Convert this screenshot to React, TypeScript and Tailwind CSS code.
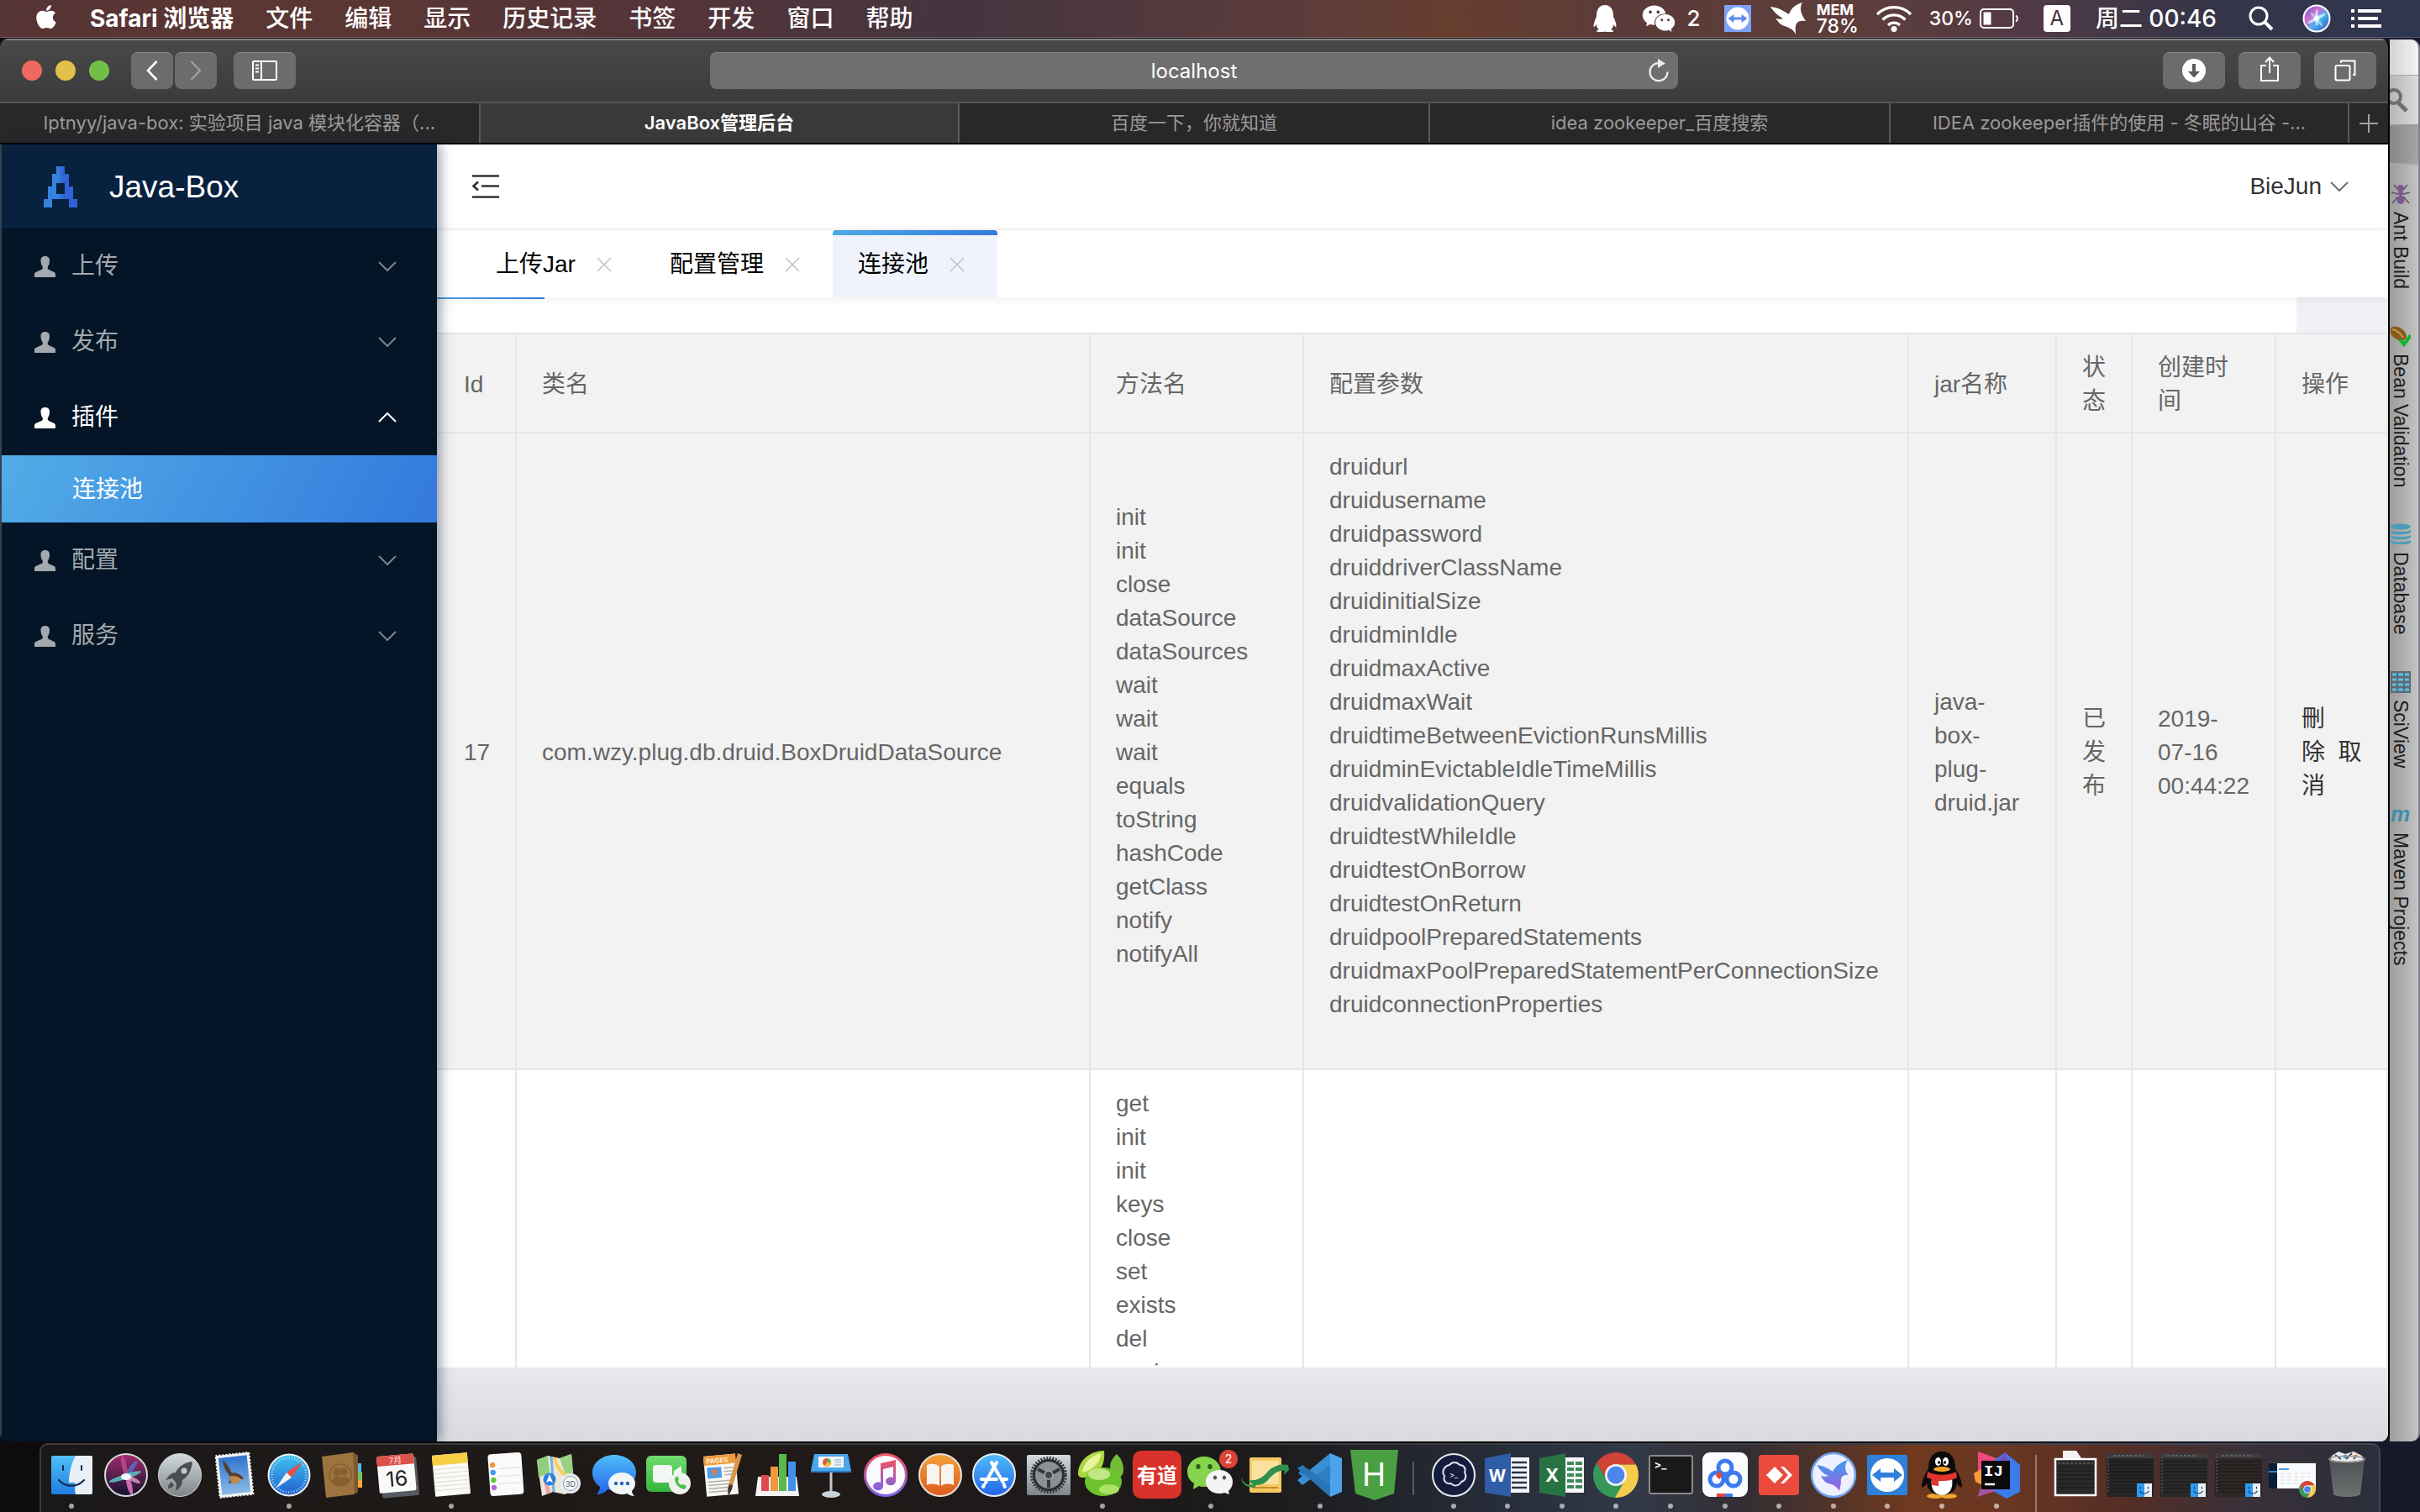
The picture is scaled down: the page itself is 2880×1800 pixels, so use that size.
import React from "react";
import { FaApple, FaQq } from "react-icons/fa";
import { AiFillWechat } from "react-icons/ai";

const SYS = "font-[Inter,'Noto_Sans_CJK_SC',sans-serif]";
const PAGE = "font-['Liberation_Sans','Noto_Sans_CJK_SC',sans-serif]";

/* ---------- small drawings ---------- */

function Chevron({ up, className }: { up?: boolean; className?: string }) {
  return (
    <svg viewBox="0 0 22 12" className={`h-3 w-[22px] ${className ?? ""}`} fill="none" stroke="currentColor" strokeWidth="2">
      <path d={up ? "M1 11 11 1l10 10" : "M1 1l10 10L21 1"} />
    </svg>
  );
}

function Cross() {
  return (
    <svg viewBox="0 0 18 18" className="size-[18px]" fill="none" stroke="#c3c3c3" strokeWidth="1.6">
      <path d="M1 1l16 16M17 1 1 17" />
    </svg>
  );
}

function Person() {
  return (
    <svg viewBox="0 0 25 25" className="size-[25px] shrink-0" fill="currentColor">
      <path d="M7.500 5C7.500 1.500 9.500 0 12.700 0S18 1.500 18 5c0 3-.7 5.500-2.200 7.500v2.300C17 16.500 20 17.300 23 18.800c1.500.8 2 1.500 2 3.200v3H0v-3c0-1.700.5-2.400 2-3.200 3-1.500 6.500-2.300 7.800-4v-2.300C8.200 10.500 7.500 8 7.500 5Z" />
    </svg>
  );
}

function TowerLogo() {
  return (
    <svg viewBox="0 0 40 49" className="h-[49px] w-10">
      <defs>
        <linearGradient id="tower" x1="0" x2="1">
          <stop offset="0.4" stopColor="#3583df" />
          <stop offset="0.6" stopColor="#2f62d6" />
        </linearGradient>
      </defs>
      <path
        fill="url(#tower)"
        fillRule="evenodd"
        d="M15 0h10v9h5v15h5v15h5v10H30V39H10v10H0V39h5V24h5V9h5ZM15 20v13h10V20Z"
      />
    </svg>
  );
}

/* ---------- menu bar ---------- */

const MENUS = ["文件", "编辑", "显示", "历史记录", "书签", "开发", "窗口", "帮助"];

function SiriOrb() {
  return (
    <svg viewBox="0 0 34 34" className="size-[34px]">
      <defs>
        <linearGradient id="orb" x1="0" y1="0" x2="1" y2="1">
          <stop offset="0" stopColor="#3a57c4" />
          <stop offset="0.35" stopColor="#d96bd0" />
          <stop offset="0.6" stopColor="#45b4ea" />
          <stop offset="1" stopColor="#3a3fb5" />
        </linearGradient>
      </defs>
      <circle cx="17" cy="17" r="15.500" fill="url(#orb)" stroke="#fff" strokeWidth="2" />
      <ellipse cx="17" cy="16" rx="1.800" ry="10" fill="#f3ecff" opacity="0.8" />
      <ellipse cx="17" cy="17" rx="12" ry="2" transform="rotate(-28 17 17)" fill="#cdf6ff" opacity="0.85" />
      <ellipse cx="17" cy="18" rx="11" ry="2" transform="rotate(50 17 18)" fill="#a8eaff" opacity="0.7" />
      <circle cx="17" cy="17" r="3" fill="#fff" />
    </svg>
  );
}

function MenuBar() {
  return (
    <header
      className={`${SYS} flex h-[45px] shrink-0 items-center justify-between border-b border-white/20 bg-[linear-gradient(90deg,#573435_0%,#5b3733_14%,#54343a_28%,#44353f_40%,#5b3b3c_53%,#673e2e_60%,#5b3b39_67%,#5e3e3a_76%,#533a44_83%,#363548_91%,#2e3650_100%)] pr-[46px] pl-[41px] text-[28px] leading-[40px] whitespace-nowrap text-white`}
    >
      <nav className="flex items-center gap-[38px]">
        <button aria-label="Apple" className="-mt-1">
          <FaApple className="h-8 w-7" />
        </button>
        <button className="font-bold">Safari 浏览器</button>
        {MENUS.map((m) => (
          <button key={m} className="font-medium">
            {m}
          </button>
        ))}
      </nav>
      <div className="flex items-center">
        <FaQq className="mr-[28px] h-8 w-[28px]" />
        <AiFillWechat className="mr-3 size-[44px]" />
        <span className="mr-[28px] text-[26px] font-medium">2</span>
        <svg viewBox="0 0 32 32" className="mr-[22px] size-8">
          <rect width="32" height="32" fill="#7ea2f8" />
          <circle cx="16" cy="16" r="13.500" fill="#fff" />
          <path d="M4.500 16l7-5v3.500h9V11l7 5-7 5v-3.500h-9V21Z" fill="#5d8af2" />
        </svg>
        <svg viewBox="0 0 44 38" className="mr-3 h-[38px] w-11" fill="#fff">
          <path d="M1 5c8 1 12 3 17 6 2 1 3 2 5 3C25 9 28 3 39 0c-3 5-2 9-1 13 1 3 3 6 5 9-6-1-9 0-11 3-2 4-1 8-1 13C27 30 22 30 15 27 13 26 10 23 7 19c4 1 7 1 9 0C9 15 5 11 1 5Z" />
        </svg>
        <span className="mr-[20px] flex flex-col pt-0.5">
          <span className="text-[18px] leading-[16px] font-bold">MEM</span>
          <span className="text-[23px] leading-[22px] font-medium">78%</span>
        </span>
        <svg viewBox="0 0 44 32" className="mr-[20px] h-8 w-11" fill="none" stroke="#fff" strokeWidth="3.400">
          <path d="M2 11a28 28 0 0 1 40 0M8.500 17.500a19 19 0 0 1 27 0M15 24a10 10 0 0 1 14 0" />
          <circle cx="22" cy="28.500" r="3.500" fill="#fff" stroke="none" />
        </svg>
        <span className="mr-2 text-[23px] font-medium">30%</span>
        <svg viewBox="0 0 46 24" className="mr-[30px] h-6 w-[46px]" fill="none" stroke="#fff" strokeWidth="2">
          <rect x="1" y="1" width="39" height="22" rx="4" />
          <rect x="4.500" y="4.500" width="9" height="15" fill="#fff" stroke="none" />
          <path d="M43 8.500c2.500 1.500 2.500 5.500 0 7" />
        </svg>
        <span className="mr-[30px] flex size-8 items-center justify-center rounded bg-white text-[24px] leading-8 text-[#45313a]">A</span>
        <time className="mr-[38px] font-medium">周二 00:46</time>
        <svg viewBox="0 0 30 30" className="mr-[34px] size-[30px]" fill="none" stroke="#fff" strokeWidth="3">
          <circle cx="12" cy="12" r="10" />
          <path d="M19 19l9 9" strokeWidth="4" />
        </svg>
        <span className="mr-[24px]">
          <SiriOrb />
        </span>
        <svg viewBox="0 0 36 22" className="h-[22px] w-9" fill="#fff">
          <path d="M0 0h4v4H0zM8 0h28v4H8zM0 9h4v4H0zM8 9h24v4H8zM0 18h4v4H0zM8 18h28v4H8z" />
        </svg>
      </div>
    </header>
  );
}

/* ---------- browser chrome ---------- */

const toolBtn =
  "flex h-11 items-center justify-center rounded-[8px] border-t border-[#8a898a] bg-[#6d6c6d] text-white";

function Toolbar() {
  return (
    <div className="grid h-[75px] shrink-0 grid-cols-[1fr_1152px_1fr] items-center border-t-2 border-[#858585] bg-linear-to-b from-[#4a4949] to-[#3c3b3b] px-[14px] pb-0.5">
      <div className="flex items-center pl-3">
        <div className="mr-[26px] flex gap-4">
          <button aria-label="Close" className="size-6 rounded-full bg-[#ee6a5f]" />
          <button aria-label="Minimize" className="size-6 rounded-full bg-[#e2c04c]" />
          <button aria-label="Zoom" className="size-6 rounded-full bg-[#72bf47]" />
        </div>
        <button aria-label="Back" className={`${toolBtn} mr-0.5 w-[50px]`}>
          <svg viewBox="0 0 14 24" className="h-6 w-[14px]" fill="none" stroke="#fff" strokeWidth="2.600">
            <path d="M12.500 1 2 12l10.500 11" />
          </svg>
        </button>
        <button aria-label="Forward" className={`${toolBtn} mr-5 w-[50px]`}>
          <svg viewBox="0 0 14 24" className="h-6 w-[14px]" fill="none" stroke="#a0a0a0" strokeWidth="2.200">
            <path d="M1.500 1 12 12 1.500 23" />
          </svg>
        </button>
        <button aria-label="Sidebar" className={`${toolBtn} w-[74px]`}>
          <svg viewBox="0 0 30 24" className="h-6 w-[30px]" fill="none" stroke="#fff" strokeWidth="2">
            <rect x="1" y="1" width="28" height="22" rx="1.500" />
            <path d="M11 1v22" />
            <path d="M4 5.500h4M4 9.500h4M4 13.500h4" />
          </svg>
        </button>
      </div>
      <div className="relative">
        <input
          readOnly
          aria-label="Address"
          value="localhost"
          className="h-11 w-full rounded-[8px] border-t border-[#8a898a] bg-[#6f6f6f] text-center text-[24px] text-white outline-none"
        />
        <button aria-label="Reload" className="absolute top-[8px] right-[10px]">
          <svg viewBox="0 0 26 28" className="h-7 w-[26px]" fill="none" stroke="#ececec" strokeWidth="2.200">
            <path d="M12.500 5.200A10.500 10.500 0 1 0 23.500 15.500" />
            <path d="M12 0l9 5.500-9 5.500Z" fill="#ececec" stroke="none" />
          </svg>
        </button>
      </div>
      <div className="flex justify-end gap-4">
        <button aria-label="Downloads" className={`${toolBtn} w-[74px]`}>
          <svg viewBox="0 0 28 28" className="size-7">
            <circle cx="14" cy="14" r="14" fill="#fff" />
            <path d="M12 6h4v9h5l-7 7.500L7 15h5Z" fill="#5c5b5c" />
          </svg>
        </button>
        <button aria-label="Share" className={`${toolBtn} w-[74px]`}>
          <svg viewBox="0 0 24 30" className="-mt-1 h-[30px] w-6" fill="none" stroke="#fff" strokeWidth="2">
            <path d="M8 11H2v18h20V11h-6M12 20V2M7 7l5-5.500L17 7" />
          </svg>
        </button>
        <button aria-label="Tabs" className={`${toolBtn} w-[74px]`}>
          <svg viewBox="0 0 26 26" className="size-[26px]" fill="none" stroke="#fff" strokeWidth="2">
            <rect x="1.500" y="7" width="17" height="17.500" rx="1.500" />
            <path d="M8 4V1.500h16.500V18H22" />
          </svg>
        </button>
      </div>
    </div>
  );
}

const TABS: { title: string; grow: string; active?: boolean }[] = [
  { title: "lptnyy/java-box: 实验项目 java 模块化容器（...", grow: "flex-[572]" },
  { title: "JavaBox管理后台", grow: "flex-[570]", active: true },
  { title: "百度一下，你就知道", grow: "flex-[560]" },
  { title: "idea zookeeper_百度搜索", grow: "flex-[548]" },
  { title: "IDEA zookeeper插件的使用 - 冬眠的山谷 -...", grow: "flex-[546]" },
];

function TabBar() {
  return (
    <div role="tablist" className="flex h-[51px] shrink-0 border-t-2 border-b-2 border-t-[#555455] border-b-black bg-[#292828] text-[22px] whitespace-nowrap">
      {TABS.map((t) => (
        <button
          key={t.title}
          role="tab"
          aria-selected={!!t.active}
          className={`${t.grow} min-w-0 border-r-2 border-[#5c5b5c] ${t.active ? "bg-[#3a3939] font-semibold text-white" : "text-[#9b9a9b]"}`}
        >
          {t.title}
        </button>
      ))}
      <button aria-label="New tab" className="flex w-[46px] items-center justify-center">
        <svg viewBox="0 0 22 22" className="size-[22px]" stroke="#a0a0a0" strokeWidth="2">
          <path d="M11 0v22M0 11h22" />
        </svg>
      </button>
    </div>
  );
}

/* ---------- admin page ---------- */

const NAV: { label: string; open?: boolean; children?: string[] }[] = [
  { label: "上传" },
  { label: "发布" },
  { label: "插件", open: true, children: ["连接池"] },
  { label: "配置" },
  { label: "服务" },
];

function Sidebar() {
  return (
    <aside className="relative z-20 w-[520px] shrink-0 border-l-2 border-white/20 bg-[#031526] shadow-[4px_0_14px_rgba(0,15,50,0.4)]">
      <div className="flex h-[100px] items-center gap-[38px] bg-[#08213e] pl-[50px]">
        <TowerLogo />
        <span className="pt-0.5 text-[37px] text-white">Java-Box</span>
      </div>
      <nav>
        {NAV.map((n) => (
          <React.Fragment key={n.label}>
            <button
              aria-expanded={!!n.open}
              className={`flex h-[90px] w-full items-center pr-[48px] pl-[39px] text-[28px] ${n.open ? "text-white" : "text-[#a3a9ae]"}`}
            >
              <Person />
              <span className="ml-[19px] flex-1 text-left">{n.label}</span>
              <Chevron up={n.open} className={n.open ? "" : "text-[#7d858d]"} />
            </button>
            {n.children?.map((c) => (
              <a key={c} href="#pool" className="flex h-20 items-center bg-[linear-gradient(118deg,#52ace6,#3379dd)] pt-0.5 pl-[84px] text-[28px] text-white">
                {c}
              </a>
            ))}
          </React.Fragment>
        ))}
      </nav>
    </aside>
  );
}

function PageTabs() {
  const tabs = ["上传Jar", "配置管理", "连接池"];
  return (
    <div role="tablist" className="relative z-10 flex h-20 shrink-0 bg-white pl-10 text-[28px] text-black shadow-[0_2px_12px_rgba(0,30,30,0.08)]">
      {tabs.map((t, i) => (
        <div key={t} className={`relative flex items-center pt-0.5 pr-[39px] pl-[30px] ${i === 2 ? "bg-[#f0f3fc]" : ""}`}>
          {i === 2 && <span className="absolute inset-x-0 top-0 h-1.5 rounded-t bg-linear-to-r from-[#50a8e6] to-[#337adc]" />}
          <button role="tab" aria-selected={i === 2}>
            {t}
          </button>
          <button aria-label={`关闭 ${t}`} className="ml-[25px]">
            <Cross />
          </button>
        </div>
      ))}
      <span className="absolute top-full left-0 h-0.5 w-32 bg-linear-to-r from-[#4a9fe0] to-[#337adc]" />
    </div>
  );
}

const METHODS = ["init", "init", "close", "dataSource", "dataSources", "wait", "wait", "wait", "equals", "toString", "hashCode", "getClass", "notify", "notifyAll"];
const PARAMS = [
  "druidurl", "druidusername", "druidpassword", "druiddriverClassName", "druidinitialSize", "druidminIdle",
  "druidmaxActive", "druidmaxWait", "druidtimeBetweenEvictionRunsMillis", "druidminEvictableIdleTimeMillis",
  "druidvalidationQuery", "druidtestWhileIdle", "druidtestOnBorrow", "druidtestOnReturn",
  "druidpoolPreparedStatements", "druidmaxPoolPreparedStatementPerConnectionSize", "druidconnectionProperties",
];
const MORE = ["get", "init", "init", "keys", "close", "set", "exists", "del", "expire"];

function Lines({ items, tail }: { items: string[]; tail?: boolean }) {
  return (
    <>
      {items.map((s, i) => (
        <div key={i}>{s}</div>
      ))}
      {tail && <div className="h-10" />}
    </>
  );
}

const cell = "border-r-2 border-b-2 border-[#e6e6e6] pt-5 pb-4 pl-[30px] text-left font-normal";
const idCell = "border-r-2 border-b-2 border-[#e6e6e6] pt-5 pb-4 pl-8 text-left font-normal";

function PoolTable() {
  return (
    <table className="w-full table-fixed border-separate border-spacing-0 border-t-2 border-[#e6e6e6] text-[28px] leading-10 text-[#666]">
      <colgroup>
        <col className="w-[95px]" />
        <col />
        <col className="w-[254px]" />
        <col className="w-[720px]" />
        <col className="w-[176px]" />
        <col className="w-[90px]" />
        <col className="w-[171px]" />
        <col className="w-[133px]" />
      </colgroup>
      <thead className="bg-[#f2f2f2]">
        <tr>
          <th className={idCell}>Id</th>
          <th className={cell}>类名</th>
          <th className={cell}>方法名</th>
          <th className={cell}>配置参数</th>
          <th className={cell}>jar名称</th>
          <th className={cell}>
            状<br />态
          </th>
          <th className={cell}>
            创建时
            <br />间
          </th>
          <th className={cell}>操作</th>
        </tr>
      </thead>
      <tbody>
        <tr className="bg-[#f2f2f2]">
          <td className={idCell}>17</td>
          <td className={cell}>com.wzy.plug.db.druid.BoxDruidDataSource</td>
          <td className={cell}>
            <Lines items={METHODS} tail />
          </td>
          <td className={cell}>
            <Lines items={PARAMS} tail />
          </td>
          <td className={cell}>
            <Lines items={["java-", "box-", "plug-", "druid.jar"]} />
          </td>
          <td className={cell}>
            <Lines items={["已", "发", "布"]} />
          </td>
          <td className={cell}>
            <Lines items={["2019-", "07-16", "00:44:22"]} />
          </td>
          <td className={`${cell} whitespace-nowrap text-[#333]`}>
            <a href="#delete">
              刪<br />除
            </a>
            &nbsp;&nbsp;
            <a href="#cancel">
              取<br />消
            </a>
          </td>
        </tr>
        <tr className="bg-white">
          <td className={cell} />
          <td className={cell} />
          <td className={cell}>
            <Lines items={MORE} />
          </td>
          <td className={cell} />
          <td className={cell} />
          <td className={cell} />
          <td className={cell} />
          <td className={cell} />
        </tr>
      </tbody>
    </table>
  );
}

function AdminPage() {
  return (
    <div className={`${PAGE} flex min-h-0 flex-1`}>
      <Sidebar />
      <main className="flex min-w-0 flex-1 flex-col bg-white">
        <div className="flex h-[102px] shrink-0 items-center justify-between border-b-2 border-[#f5f5f5] pr-[47px] pl-[42px]">
          <button aria-label="收起菜单">
            <svg viewBox="0 0 32 28" className="h-7 w-8" fill="none" stroke="#333" strokeWidth="2.600">
              <path d="M0 1.500h32M11 13.500h21M0 26.500h32M7 8.500 1.500 13.500 7 18.500" />
            </svg>
          </button>
          <button className="flex items-center gap-2.5 text-[28px] text-[#333]">
            BieJun
            <Chevron className="text-[#6b7078]" />
          </button>
        </div>
        <PageTabs />
        <div className="flex h-[42px] shrink-0 justify-end">
          <div className="w-[109px] bg-[#eff1f6]" />
        </div>
        <div className="min-h-0 flex-1 overflow-hidden">
          <PoolTable />
        </div>
        <div className="h-[88px] shrink-0 bg-linear-to-b from-[#e8e9ee] to-[#d9dadd]" />
      </main>
    </div>
  );
}

/* ---------- IDE window peeking out on the right ---------- */

function ToolStrip() {
  const items: { name: string; icon: React.ReactNode }[] = [
    {
      name: "Ant Build",
      icon: (
        <g fill="#7b5595" stroke="#5c5560" strokeWidth="1.500">
          <path d="M4 2l5 6M20 2l-5 6M1 11l8 2M23 11l-8 2M2 24l7-8M22 24l-7-8" fill="none" />
          <circle cx="12" cy="6" r="4" stroke="none" />
          <circle cx="12" cy="12" r="3" stroke="none" />
          <ellipse cx="12" cy="20" rx="4.500" ry="5" stroke="none" />
        </g>
      ),
    },
    {
      name: "Bean Validation",
      icon: (
        <g>
          <ellipse cx="9" cy="10" rx="11" ry="7" transform="rotate(35 9 10)" fill="#8a5a1c" />
          <path d="M2 5c6 1 10 5 13 10" stroke="#c99a4e" strokeWidth="2" fill="none" />
          <path d="M11 17l5 6 8-11" stroke="#12b52a" strokeWidth="4" fill="none" />
        </g>
      ),
    },
    {
      name: "Database",
      icon: (
        <g fill="#4a9cba">
          <ellipse cx="12" cy="4" rx="12" ry="3.500" />
          <path d="M0 8c5 3 19 3 24 0v3c-5 3-19 3-24 0ZM0 14c5 3 19 3 24 0v3c-5 3-19 3-24 0ZM0 20c5 3 19 3 24 0v3c-5 3-19 3-24 0Z" />
        </g>
      ),
    },
    {
      name: "SciView",
      icon: (
        <g>
          <rect width="24" height="26" fill="#5e6b76" />
          <path d="M2 4h5M9 4h6M17 4h5M2 10h5M9 10h6M17 10h5M2 16h5M9 16h6M17 16h5M2 22h5M9 22h6M17 22h5" stroke="#5cc0e2" strokeWidth="3" />
        </g>
      ),
    },
    {
      name: "Maven Projects",
      icon: (
        <text x="0" y="21" fontSize="26" fontWeight="700" fontStyle="italic" fill="#3d8ead" fontFamily="Liberation Sans, sans-serif">
          m
        </text>
      ),
    },
  ];
  return (
    <aside className="mt-0.5 flex w-9 shrink-0 flex-col rounded-r-[10px] border-r-2 border-[#82828c] bg-linear-to-r from-[#9c9c9c] to-[#c4c4c4]">
      <div className="h-[43px] rounded-tr-[10px] border-b border-[#a9a9a9] bg-linear-to-r from-[#d2d2d2] to-[#f4f4f4]" />
      <div className="flex h-[60px] items-center overflow-hidden border-b-2 border-[#999] bg-linear-to-r from-[#b5b5b5] to-[#dcdcdc]">
        <svg viewBox="0 0 26 30" className="-ml-1 h-[30px] w-[26px]" fill="none" stroke="#6e6e6e" strokeWidth="4">
          <circle cx="9" cy="11" r="8" />
          <path d="M14 18l10 10" strokeWidth="5" />
        </svg>
      </div>
      <div className="h-[46px] border-b-2 border-[#a5a5a5] bg-linear-to-r from-[#868686] to-[#a6a6a6]" />
      <div className="flex flex-col gap-[43px] pt-[22px]">
        {items.map((it) => (
          <button key={it.name} className="flex w-[26px] flex-col items-center gap-2">
            <svg viewBox="0 0 24 26" className="h-[26px] w-6 shrink-0">
              {it.icon}
            </svg>
            <span className={`${PAGE} text-[23px] leading-6 whitespace-nowrap text-[#1c1c1c] [writing-mode:vertical-rl]`}>{it.name}</span>
          </button>
        ))}
      </div>
    </aside>
  );
}

/* ---------- dock ---------- */

const T = ({ x, y, s, c, b, r, children }: { x: number; y: number; s: number; c: string; b?: boolean; r?: string; children: string }) => (
  <text x={x} y={y} fontSize={s} fill={c} fontWeight={b ? 700 : 400} textAnchor="middle" transform={r} fontFamily="Inter, 'Noto Sans CJK SC', sans-serif">
    {children}
  </text>
);

const MiniFinder = () => (
  <g>
    <rect x="40" y="42" width="9" height="16" fill="#2e9bf0" />
    <rect x="49" y="42" width="9" height="16" fill="#e8eef5" />
    <path d="M43.500 51c3 4 8 4 11 0" stroke="#1c3a63" strokeWidth="1.200" fill="none" />
    <path d="M44.500 46v2.500M53.500 46v2.500" stroke="#1c3a63" strokeWidth="1.200" />
  </g>
);

const DarkWindow = ({ tint }: { tint: string }) => (
  <g>
    <rect x="4" y="6" width="56" height="52" fill={tint} />
    <rect x="4" y="6" width="56" height="6" fill="#3d3b3b" />
    <path d="M4 16h56M4 20h56M4 24h56M4 28h56M4 32h56M4 36h56M4 40h56M4 44h56M4 48h56M4 52h56" stroke="#181717" strokeWidth="1" />
    <path d="M6 10v44" stroke="#4c4a4a" strokeWidth="2" strokeDasharray="2 2" />
    <path d="M12 9h36" stroke="#8a8888" strokeWidth="1" strokeDasharray="3 2" />
    <MiniFinder />
  </g>
);

const ChromeBall = ({ cx, cy, r }: { cx: number; cy: number; r: number }) => (
  <g transform={`translate(${cx} ${cy}) scale(${r / 26})`}>
    <path d="M0-12H23A26 26 0 0 0-21.900-14L-10.400 6Z" fill="#cf4437" />
    <path d="M-10.400 6-21.900-14A26 26 0 0 0-1.100 26L10.400 6Z" fill="#36995a" />
    <path d="M10.400 6-1.100 26A26 26 0 0 0 23-12H0Z" fill="#f5cd4c" />
    <circle r="12.500" fill="#f4f4f4" />
    <circle r="10" fill="#4a86ec" />
  </g>
);

type DockItem = { id: string; dot?: boolean; art: React.ReactNode };

const APPS: DockItem[] = [
  {
    id: "Finder",
    dot: true,
    art: (
      <g>
        <rect x="8" y="9" width="49" height="46" rx="2" fill="url(#gFinder)" />
        <path d="M37 9h18a2 2 0 0 1 2 2v42a2 2 0 0 1-2 2H37c-1-5-1-9-1-14h-7c0-12 3-23 8-32Z" fill="#e9eff6" />
        <path d="M17 38c8 9 22 9 30 0M22 21v5M44 21v5" stroke="#16284a" strokeWidth="2" fill="none" strokeLinecap="round" />
      </g>
    ),
  },
  {
    id: "Siri",
    art: (
      <g>
        <circle cx="32" cy="32" r="25" fill="url(#gSiri)" stroke="#d8d8dd" strokeWidth="2" />
        <ellipse cx="30" cy="22" rx="3" ry="13" transform="rotate(-12 30 22)" fill="#d8579f" opacity="0.6" />
        <ellipse cx="38" cy="25" rx="3" ry="12" transform="rotate(35 38 25)" fill="#5d76d8" opacity="0.7" />
        <ellipse cx="31" cy="34" rx="20" ry="3" transform="rotate(-18 31 34)" fill="#5fdcd8" opacity="0.75" />
        <ellipse cx="36" cy="44" rx="3" ry="12" transform="rotate(-14 36 44)" fill="#e77cc6" opacity="0.85" />
        <ellipse cx="40" cy="37" rx="10" ry="2.500" transform="rotate(26 40 37)" fill="#f3b6d8" opacity="0.7" />
        <ellipse cx="32" cy="34" rx="6" ry="4" fill="#fff" opacity="0.9" />
      </g>
    ),
  },
  {
    id: "Launchpad",
    art: (
      <g>
        <circle cx="32" cy="32" r="25.500" fill="url(#gSilver)" stroke="#d0d5d8" strokeWidth="1" />
        <path d="M47 16c-9 1-16 5-20 13-4 0-8 3-12 9l8-2 5 6-1 9c6-4 8-8 8-13 7-4 11-12 12-22Z" fill="#494e54" />
        <circle cx="37" cy="27" r="3.500" fill="#c3cacd" />
        <path d="M22 40c-3 2-4 5-4 8 3 0 6-2 7-4Z" fill="#494e54" />
      </g>
    ),
  },
  {
    id: "Mail",
    art: (
      <g transform="rotate(-6 32 32)">
        <rect x="12" y="7" width="40" height="50" fill="#f0f1f2" stroke="#fff" strokeWidth="2" strokeDasharray="2 2" />
        <rect x="15" y="10" width="34" height="44" fill="url(#gSky)" />
        <path d="M20 13c4 4 7 9 9 16 6 0 11 3 14 9-4-1-6 0-8 4-2-2-6-3-11 0 2-4 3-7 1-12-4-5-5-11-5-17Z" fill="#54412f" />
        <path d="M26 33c5-1 10 1 14 5l-8 5c-4 0-6-4-6-10Z" fill="#c08a4c" />
      </g>
    ),
  },
  {
    id: "Safari",
    dot: true,
    art: (
      <g>
        <circle cx="32" cy="32" r="25.500" fill="#eef2f5" />
        <circle cx="32" cy="32" r="23.500" fill="url(#gSafari)" />
        <circle cx="32" cy="32" r="20.500" fill="none" stroke="#bfe3fb" strokeWidth="3" strokeDasharray="0.8 2.400" />
        <path d="M48 16 35 35l-6-6Z" fill="#ee4b40" />
        <path d="M16 48 29 29l6 6Z" fill="#f1f2f3" />
      </g>
    ),
  },
  {
    id: "Contacts",
    art: (
      <g>
        <path d="M44 18h10v10H44z" fill="#57b7e8" />
        <path d="M44 28h11v10H44z" fill="#79c257" />
        <path d="M44 38h11v9H44z" fill="#f2a63a" />
        <path d="M7 10 44 5l6 4v43l-5 3-33 4Z" fill="#9d7440" />
        <path d="M44 5l6 4v43l-4 2Z" fill="#7c5a2f" />
        <circle cx="29" cy="32" r="13" fill="none" stroke="#84602f" strokeWidth="1.500" />
        <circle cx="25" cy="28" r="4.500" fill="#84602f" />
        <circle cx="33" cy="28" r="4.500" fill="#84602f" />
        <path d="M19 41c1-6 4-8 7-8s4 1 5 2c2-2 8-1 9 5-5 6-15 7-21 1Z" fill="#84602f" />
      </g>
    ),
  },
  {
    id: "Calendar",
    art: (
      <g transform="rotate(-5 32 32)">
        <rect x="12" y="12" width="44" height="46" rx="2" fill="#555b60" />
        <rect x="9" y="8" width="44" height="44" rx="2" fill="#fafafa" />
        <path d="M9 10a2 2 0 0 1 2-2h40a2 2 0 0 1 2 2v10H9Z" fill="#dc5148" />
        <T x={31} y={18} s={10} c="#fbe5e3">7月</T>
        <T x={31} y={45} s={25} c="#222">16</T>
      </g>
    ),
  },
  {
    id: "Notes",
    dot: true,
    art: (
      <g transform="rotate(-5 32 32)">
        <rect x="11" y="7" width="42" height="49" rx="1" fill="#fbfaf6" />
        <rect x="11" y="7" width="42" height="12" fill="#f6cf45" />
        <path d="M11 24h42M11 29h42M11 34h42M11 39h42M11 44h42M11 49h42" stroke="#dcdad4" strokeWidth="1" />
      </g>
    ),
  },
  {
    id: "Reminders",
    art: (
      <g transform="rotate(-4 32 32)">
        <rect x="12" y="6" width="40" height="50" rx="4" fill="#fafafa" />
        <path d="M23 24h27M23 33h27M23 42h27" stroke="#ddd" strokeWidth="1" />
        <circle cx="17" cy="19" r="3.200" fill="#f39438" />
        <circle cx="17" cy="28" r="3.200" fill="#3f9ef2" />
        <circle cx="17" cy="37" r="3.200" fill="#5fc43f" />
        <circle cx="17" cy="46" r="3.200" fill="#b46bd6" />
      </g>
    ),
  },
  {
    id: "Maps",
    art: (
      <g>
        <path d="M5 14 18 9l14 3 14-5 4 43-12 5-14-3-13 5Z" fill="#ece7d8" />
        <path d="M5 14 18 9l2 20-13 6Z" fill="#8fce7c" />
        <path d="M32 12 46 7l2 26-10-4Z" fill="#98d384" />
        <path d="M26 11c2 12 8 20 22 26" stroke="#f8d054" strokeWidth="4" fill="none" />
        <path d="M15 38l4 16" stroke="#f0a3ab" strokeWidth="5" />
        <path d="M22 10l3 42" stroke="#6cb5ea" strokeWidth="3" />
        <circle cx="20" cy="37" r="7.500" fill="#2f7fe3" />
        <path d="M20 31l4 10-4-2-4 2Z" fill="#fff" />
        <circle cx="45" cy="42" r="12" fill="#e9ebed" />
        <circle cx="45" cy="42" r="8.500" fill="#f8f8f8" stroke="#8aa0b2" strokeWidth="1" />
        <T x={45} y={46} s={9} c="#4c5a66">3D</T>
      </g>
    ),
  },
  {
    id: "Messages",
    art: (
      <g>
        <path d="M32 8c14 0 26 9 26 21S46 50 32 50c-3 0-5 0-8-1-3 4-8 6-13 6 3-3 4-6 4-9C9 42 6 36 6 29 6 17 18 8 32 8Z" fill="url(#gMsg)" />
        <path d="M41 29c9 0 16 6 16 13 0 4-2 7-4 9 0 2 1 4 3 6-4 0-7-2-9-3-2 1-4 1-6 1-9 0-16-6-16-13s7-13 16-13Z" fill="#f2f5f8" />
        <circle cx="34" cy="42" r="2.200" fill="#2a62b5" />
        <circle cx="41" cy="42" r="2.200" fill="#2a62b5" />
        <circle cx="48" cy="42" r="2.200" fill="#2a62b5" />
      </g>
    ),
  },
  {
    id: "FaceTime",
    art: (
      <g>
        <rect x="5" y="9" width="48" height="43" rx="6" fill="url(#gGreen)" />
        <rect x="13" y="20" width="23" height="21" rx="4" fill="#f3f7f3" />
        <path d="M38 27l9-6v19l-9-6Z" fill="#f3f7f3" />
        <circle cx="45" cy="42" r="13" fill="#eef1ee" />
        <path d="M39 36c0 8 6 12 12 13l2-4-4-2-2 1c-2-1-4-3-4-5l1-2-2-4Z" fill="#4cc24c" />
      </g>
    ),
  },
  {
    id: "Pages",
    art: (
      <g>
        <g transform="rotate(-5 32 32)">
          <rect x="11" y="8" width="38" height="48" fill="#f8f7f4" />
          <rect x="11" y="8" width="38" height="11" fill="#f09a3c" />
          <T x={27} y={17} s={8} c="#fff1de" b>PAGES</T>
          <rect x="14" y="22" width="17" height="13" fill="#4f9ee6" />
          <path d="M19 25h8l-4 8Z" fill="#f07838" />
          <path d="M34 24h12M34 28h12M34 32h12M14 39h28M14 43h28M14 47h26M14 51h24" stroke="#b0aeaa" strokeWidth="1.500" />
        </g>
        <path d="M50 6l5 2-12 40-4 8-1-9Z" fill="#d99548" />
        <path d="M40 43l4 1-1 5-4 8-1-8Z" fill="#3a3a3a" />
      </g>
    ),
  },
  {
    id: "Numbers",
    art: (
      <g>
        <path d="M9 34h46l3 23H6Z" fill="#f2f3f4" />
        <rect x="13" y="32" width="9" height="19" fill="#e0484e" />
        <rect x="24" y="22" width="9" height="29" fill="#f0983e" />
        <rect x="34" y="7" width="9" height="44" fill="#57ba4c" />
        <rect x="45" y="16" width="9" height="35" fill="#4490e8" />
      </g>
    ),
  },
  {
    id: "Keynote",
    art: (
      <g>
        <path d="M12 7h40l4 20H8Z" fill="#4ba6ea" />
        <path d="M8 27h48v2H8Z" fill="#2c7bc0" />
        <rect x="17" y="10" width="30" height="13" fill="#f4f5f6" />
        <circle cx="27" cy="17" r="5" fill="#e8554c" />
        <path d="M27 17v-5a5 5 0 0 1 5 5Z" fill="#57ba4c" />
        <path d="M27 17h5a5 5 0 0 1-8 4Z" fill="#f3b93e" />
        <path d="M36 14h8M36 17h8M36 20h8" stroke="#9cc4e4" strokeWidth="1.500" />
        <path d="M30.500 29h3v24h-3z" fill="#c3c8cc" />
        <ellipse cx="32" cy="55" rx="11" ry="4" fill="#c9d2d9" />
      </g>
    ),
  },
  {
    id: "iTunes",
    art: (
      <g>
        <circle cx="32" cy="32" r="24.500" fill="#fbfbfd" stroke="url(#gTunes)" strokeWidth="3" />
        <path d="M26 18 44 14v25a6 5 0 1 1-3-4V22l-12 3v20a6 5 0 1 1-3-4Z" fill="url(#gTunes)" />
      </g>
    ),
  },
  {
    id: "Books",
    art: (
      <g>
        <circle cx="32" cy="32" r="25" fill="url(#gBooks)" stroke="#e9e2d8" strokeWidth="2" />
        <path d="M31 22c-4-4-10-4-15-2v24c5-2 11-2 15 1Zm2 0c4-4 10-4 15-2v24c-5-2-11-2-15 1Z" fill="#f8f5f0" />
      </g>
    ),
  },
  {
    id: "App Store",
    art: (
      <g>
        <circle cx="32" cy="32" r="25" fill="url(#gMsg)" stroke="#e8edf3" strokeWidth="2" />
        <path d="M35 17 22 41M29 17l14 24M17 37h18M41 37h6M20 44l-1 2M44 44l1 2" stroke="#fff" strokeWidth="4" strokeLinecap="round" />
      </g>
    ),
  },
  {
    id: "Settings",
    art: (
      <g>
        <rect x="6" y="8" width="52" height="48" rx="2" fill="url(#gSilver)" />
        <circle cx="32" cy="32" r="20" fill="none" stroke="#37393b" strokeWidth="4" strokeDasharray="2 1.500" />
        <circle cx="32" cy="32" r="17.500" fill="#8c9093" stroke="#2c2e30" strokeWidth="3" />
        <path d="M32 32 19 25M32 32l13-7M32 32v15" stroke="#35373a" strokeWidth="4" />
        <circle cx="32" cy="32" r="5" fill="#44474a" stroke="#a9adb0" strokeWidth="1.500" />
      </g>
    ),
  },
  {
    id: "Leaf",
    dot: true,
    art: (
      <g>
        <path d="M34 3C18 3 3 14 3 31c0 2 2 4 5 4 17 1 28-12 26-32Z" fill="#a9d93f" />
        <path d="M31 6C20 8 9 17 8 29c12-3 20-10 23-23Z" fill="#e9f39c" />
        <path d="M49 7C38 17 40 28 46 34c6 3 11-1 11-8 0-8-3-14-8-19Z" fill="#6fbe34" />
        <ellipse cx="33" cy="40" rx="22" ry="17" fill="#6cc32c" />
        <ellipse cx="28" cy="31" rx="13" ry="7" fill="#d4f09a" opacity="0.8" />
        <ellipse cx="40" cy="49" rx="12" ry="6" fill="#c9f084" opacity="0.7" />
      </g>
    ),
  },
  {
    id: "Youdao",
    art: (
      <g>
        <rect x="3" y="3" width="58" height="57" rx="10" fill="#d8322a" />
        <T x={32} y={41} s={24} c="#fff" b>有道</T>
      </g>
    ),
  },
  {
    id: "WeChat",
    dot: true,
    art: (
      <g>
        <path d="M24 10c11 0 20 8 20 18s-9 18-20 18c-2 0-4 0-6-1l-7 4 1-7C7 39 4 34 4 28c0-10 9-18 20-18Z" fill="#85d44c" />
        <ellipse cx="17" cy="22" rx="2.700" ry="3" fill="#2d5a1c" />
        <ellipse cx="31" cy="22" rx="2.700" ry="3" fill="#2d5a1c" />
        <path d="M42 26c9 0 16 6 16 14 0 5-2 8-5 11l1 4-6-2c-2 1-4 1-6 1-9 0-16-6-16-14s7-14 16-14Z" fill="#f4f4f5" />
        <ellipse cx="37" cy="35" rx="2.200" ry="2.500" fill="#555" />
        <ellipse cx="48" cy="35" rx="2.200" ry="2.500" fill="#555" />
        <circle cx="53" cy="13" r="11" fill="#dc4438" />
        <T x={53} y={18} s={14} c="#fff">2</T>
      </g>
    ),
  },
  {
    id: "SwitchHosts",
    art: (
      <g>
        <rect x="13" y="11" width="38" height="42" rx="2" fill="#f4c95f" />
        <rect x="16" y="15" width="32" height="28" fill="#f9e2a0" />
        <path d="M17 47h30" stroke="#c38d2a" strokeWidth="2" />
        <path d="M59 20c-10-2-20 2-26 10-6 6-12 9-21 8 2 6 14 9 22 1 7-8 12-13 21-12l-1 5 6-6Z" fill="#2f8f4e" />
        <path d="M4 34c0 8 8 12 18 8l-3 5C9 47 2 42 4 34Z" fill="#2f8f4e" />
      </g>
    ),
  },
  {
    id: "VS Code",
    dot: true,
    art: (
      <g>
        <path d="M44 6 14 36l-8-6 3-4 35 23Z" fill="#2f7fc4" />
        <path d="M44 6v14L11 44l-6-6L44 6Z" fill="#3a8fd4" />
        <path d="M11 20 5 24l39 34V44Z" fill="#2b74b6" />
        <path d="M44 6l14 6v40l-14 6Z" fill="#4ba4ea" />
      </g>
    ),
  },
  {
    id: "HBuilder",
    art: (
      <g>
        <path d="M4 2h57l-5 52-23 8-23-8Z" fill="#4a9f42" />
        <T x={32} y={45} s={38} c="#fff">H</T>
      </g>
    ),
  },
];

const RUNNING: DockItem[] = [
  {
    id: "Termius",
    dot: true,
    art: (
      <g>
        <circle cx="32" cy="32" r="25" fill="#151d3f" stroke="#e9ebf2" strokeWidth="2" />
        <path d="M27 20c3-4 9-4 12 0 5 0 8 4 6 9 3 4 1 10-4 11-2 5-9 6-12 2-6 1-10-3-8-9-4-5 0-12 6-13Z" fill="none" stroke="#dfe3f0" strokeWidth="2" />
        <T x={32} y={35} s={9} c="#fff">&gt;_</T>
      </g>
    ),
  },
  {
    id: "Word",
    dot: true,
    art: (
      <g>
        <rect x="34" y="11" width="24" height="42" fill="#f5f6f8" />
        <path d="M37 17h18M37 23h18M37 29h18M37 35h18M37 41h18M37 47h18" stroke="#2c3446" strokeWidth="2.500" />
        <path d="M5 12 36 6v52L5 53Z" fill="#2f5da8" />
        <T x={20} y={40} s={20} c="#fff" b>W</T>
      </g>
    ),
  },
  {
    id: "Excel",
    dot: true,
    art: (
      <g>
        <rect x="34" y="11" width="24" height="42" fill="#f5f6f8" />
        <path d="M38 18h8M48 18h8M38 25h8M48 25h8M38 32h8M48 32h8M38 39h8M48 39h8M38 46h8M48 46h8" stroke="#3f8a58" strokeWidth="4" />
        <path d="M5 12 36 6v52L5 53Z" fill="#287343" />
        <T x={20} y={40} s={22} c="#fff" b>X</T>
      </g>
    ),
  },
  { id: "Chrome", dot: true, art: <ChromeBall cx={32} cy={32} r={27} /> },
  {
    id: "Terminal",
    dot: true,
    art: (
      <g>
        <rect x="7" y="9" width="51" height="45" rx="2" fill="#191919" stroke="#8a8a8a" strokeWidth="2" />
        <T x={20} y={24} s={13} c="#f2f2f2" b>&gt;_</T>
      </g>
    ),
  },
  {
    id: "Baidu Disk",
    dot: true,
    art: (
      <g>
        <rect x="5" y="5" width="54" height="53" rx="9" fill="#fbfcfe" />
        <circle cx="32" cy="23" r="8" fill="none" stroke="#3b7bf0" strokeWidth="5" />
        <circle cx="22" cy="37" r="8" fill="none" stroke="#3b7bf0" strokeWidth="5" />
        <circle cx="42" cy="37" r="8" fill="none" stroke="#3b7bf0" strokeWidth="5" />
        <path d="M24 27l5 5-4 5-4-4Z" fill="#e2453c" />
        <path d="M22 54h10v4H22z" fill="#e2453c" />
        <path d="M32 54h9v4h-9z" fill="#3b7bf0" />
      </g>
    ),
  },
  {
    id: "AnyDesk",
    dot: true,
    art: (
      <g>
        <rect x="8" y="8" width="48" height="48" rx="4" fill="#ea4b3d" />
        <path d="M27 22 37 32 27 42 17 32Z" fill="#fff" />
        <path d="M34 22h4l10 10-10 10h-4l9-10Z" fill="#fff" />
      </g>
    ),
  },
  {
    id: "Hummingbird",
    dot: true,
    art: (
      <g>
        <circle cx="32" cy="32" r="26" fill="#eef1fd" stroke="#6f9ef0" strokeWidth="2.500" />
        <path d="M12 20c8 1 14 4 19 8 2-5 8-11 18-14-4 6-4 13 1 18-7-1-10 3-9 9l-2 10c-3-5-7-8-13-9-4-1-6-4-9-9 4 1 6 1 9 0-7-3-11-8-14-13Z" fill="url(#gBird)" />
      </g>
    ),
  },
  {
    id: "TeamViewer",
    dot: true,
    art: (
      <g>
        <rect x="8" y="8" width="48" height="48" rx="2" fill="#2f80da" />
        <circle cx="32" cy="32" r="20" fill="#fff" />
        <path d="M14 32l10-8v5h16v-5l10 8-10 8v-5H24v5Z" fill="#2f80da" />
      </g>
    ),
  },
  {
    id: "QQ",
    dot: true,
    art: (
      <g>
        <ellipse cx="24" cy="57" rx="10" ry="3" fill="#f0a92c" />
        <ellipse cx="40" cy="57" rx="10" ry="3" fill="#f0a92c" />
        <path d="M32 4c11 0 16 8 16 20 4 7 8 14 8 23-3-1-5-3-6-6-1 9-7 15-18 15s-17-6-18-15c-1 3-3 5-6 6 0-9 4-16 8-23C16 12 21 4 32 4Z" fill="#0b0b0c" />
        <path d="M20 36h24c2 12-3 20-12 20s-14-8-12-20Z" fill="#fff" />
        <ellipse cx="27.500" cy="16" rx="3.500" ry="5" fill="#fff" />
        <ellipse cx="36.500" cy="16" rx="3.500" ry="5" fill="#fff" />
        <circle cx="28.500" cy="17" r="1.700" fill="#000" />
        <circle cx="35.500" cy="17" r="1.700" fill="#000" />
        <ellipse cx="32" cy="25" rx="10" ry="3" fill="#f2a52a" />
        <path d="M15 28c10 5 24 5 34 0l1 7c-6 3-11 4-16 4H28v6l-8-1v-7l-6-2Z" fill="#e2342d" />
      </g>
    ),
  },
  {
    id: "IntelliJ IDEA",
    dot: true,
    art: (
      <g>
        <path d="M10 4l22 8-6 30-16-2Z" fill="#e94b7e" />
        <path d="M5 30l10-6v20l-8-4Z" fill="#f79a3b" />
        <path d="M42 5l18 15v32L44 60 26 50l4-36Z" fill="#3b7bea" />
        <path d="M42 5l-8 12h14Z" fill="#7a4fc0" />
        <path d="M9 58l6-16 16 9Z" fill="#a4559e" />
        <rect x="14" y="15" width="34" height="34" fill="#0a0a0b" />
        <text x="17" y="33" fontSize="19" fontWeight="700" fill="#fff" fontFamily="Liberation Mono, monospace">IJ</text>
        <path d="M18 43h12" stroke="#fff" strokeWidth="2.500" />
      </g>
    ),
  },
];

const MINIMIZED: DockItem[] = [
  {
    id: "Documents",
    art: (
      <g>
        <path d="M17 3h16l6 9v4H17Z" fill="#f4f4f4" />
        <rect x="8" y="13" width="48" height="43" fill="#2b2a2a" stroke="#fff" strokeWidth="2.500" />
        <path d="M10 22h44M10 27h44M10 32h44M10 37h44M10 42h44M10 47h44" stroke="#181717" strokeWidth="1" />
        <path d="M11 18h42" stroke="#777" strokeWidth="1" strokeDasharray="3 2" />
      </g>
    ),
  },
  { id: "Window 1", art: <DarkWindow tint="#262626" /> },
  { id: "Window 2", art: <DarkWindow tint="#2b2a29" /> },
  { id: "Window 3", art: <DarkWindow tint="#2e2826" /> },
  {
    id: "Chrome window",
    art: (
      <g>
        <rect x="4" y="16" width="56" height="32" fill="#fafbfc" />
        <rect x="4" y="16" width="10" height="32" fill="#0b1f38" />
        <path d="M4 16h56v2H4z" fill="#3a3a3a" />
        <path d="M4 28h10" stroke="#2f80da" strokeWidth="2" />
        <path d="M16 25h12" stroke="#4a9be8" strokeWidth="2" />
        <path d="M18 30h36M18 34h36M18 38h26M18 42h22" stroke="#d8dbe0" strokeWidth="1" strokeDasharray="5 3" />
        <ChromeBall cx={50} cy={49} r={10} />
      </g>
    ),
  },
  {
    id: "Trash",
    art: (
      <g>
        <path d="M14 9l8-5 8 3 10-3 10 5 2 7H12Z" fill="#ececec" />
        <path d="M18 8l7 5M38 6l-7 7M44 8l-4 5" stroke="#4a4a4a" strokeWidth="2" />
        <path d="M28 8h4v4h-4z" fill="#3f9de0" />
        <path d="M40 8h4v3h-4z" fill="#e8853c" />
        <path d="M11 13c10 4 32 4 42 0l-5 42c-4 4-28 4-32 0Z" fill="url(#gTrash)" />
        <ellipse cx="32" cy="13" rx="21" ry="3.500" fill="none" stroke="#9a9d9f" strokeWidth="1.500" />
      </g>
    ),
  },
];

function Grad({ id, a, b }: { id: string; a: string; b: string }) {
  return (
    <linearGradient id={id} x1="0" y1="0" x2="0" y2="1">
      <stop offset="0" stopColor={a} />
      <stop offset="1" stopColor={b} />
    </linearGradient>
  );
}

function DockGroup({ items }: { items: DockItem[] }) {
  return (
    <>
      {items.map((it) => (
        <button key={it.id} aria-label={it.id} className="relative flex min-w-0 flex-1 justify-center pt-1">
          <svg viewBox="0 0 64 64" className="size-16 shrink-0">
            {it.art}
          </svg>
          {it.dot && <span className="absolute bottom-1 left-1/2 size-1.5 -translate-x-1/2 rounded-full bg-white/60" />}
        </button>
      ))}
    </>
  );
}

function Dock() {
  return (
    <footer className="mx-[47px] mt-0.5 flex h-[82px] shrink-0 rounded-t-[10px] border-2 border-b-0 border-white/20 bg-[linear-gradient(90deg,#1b1918_0%,#201a18_30%,#1c1a1a_52%,#262c38_62%,#323947_68%,#332e33_73%,#70391f_80%,#6a3722_84%,#552e25_89%,#3a3038_94%,#2b2e3b_100%)] bg-clip-padding pr-1.5 pl-1">
      <svg className="absolute size-0">
        <defs>
          <Grad id="gFinder" a="#4fc0f8" b="#1f7de2" />
          <Grad id="gSiri" a="#a02d6e" b="#12132f" />
          <Grad id="gSilver" a="#d3dbdf" b="#7e8487" />
          <Grad id="gSky" a="#2f74cf" b="#8ab9e6" />
          <Grad id="gSafari" a="#3fc4ee" b="#2060d0" />
          <Grad id="gMsg" a="#51bdf8" b="#2164ec" />
          <Grad id="gGreen" a="#70dc6e" b="#35b63c" />
          <Grad id="gTunes" a="#ee5366" b="#7f65e6" />
          <Grad id="gBooks" a="#f5a13a" b="#dc5a20" />
          <Grad id="gBird" a="#3d9df0" b="#9a5fe0" />
          <Grad id="gTrash" a="#4d5153" b="#6d7172" />
        </defs>
      </svg>
      <DockGroup items={APPS} />
      <span className="mx-3.5 my-5 w-0.5 bg-white/25" />
      <DockGroup items={RUNNING} />
      <span className="mx-3.5 mt-3 w-0.5 bg-white/35" />
      <DockGroup items={MINIMIZED} />
    </footer>
  );
}

export default function App() {
  return (
    <div className="flex h-screen w-full flex-col overflow-hidden bg-[linear-gradient(90deg,#0d0b0c,#0b0a0d_60%,#17182a)]">
      <MenuBar />
      <div className="flex min-h-0 flex-1 bg-[linear-gradient(90deg,#0d0b0c,#17182a)]">
        <section className={`${SYS} mt-px flex min-w-0 flex-1 flex-col overflow-hidden rounded-[10px] border-r-2 border-black`}>
          <Toolbar />
          <TabBar />
          <AdminPage />
        </section>
        <ToolStrip />
      </div>
      <Dock />
    </div>
  );
}
